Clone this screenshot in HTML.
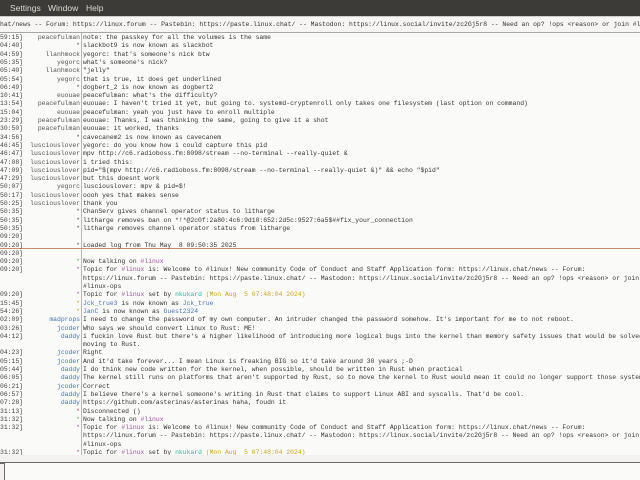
<!DOCTYPE html>
<html><head><meta charset="utf-8"><style>
*{margin:0;padding:0;box-sizing:border-box}
body{width:640px;height:480px;overflow:hidden;background:#f6f5f4;position:relative;font-family:"Liberation Mono",monospace;}
#menu{position:absolute;left:0;top:0;width:640px;height:16px;background:#3c3b37;color:#dfdbd2;font-family:"Liberation Sans",sans-serif;font-size:8.5px;line-height:16px}
#menu span{position:absolute;top:0}
#topic{position:absolute;left:0;top:16px;width:640px;height:17px;background:#f6f5f4;border-top:1px solid #cfcdc9;border-bottom:1px solid #a8a6a2;font-size:6.4px;line-height:15px;color:#333;white-space:pre;overflow:hidden}
#chat{position:absolute;left:0;top:33px;width:640px;height:422px;background:#fafaf9;overflow:hidden}
#sep{position:absolute;left:81px;top:0;width:1px;height:422px;background:#b9b7b3}
.r{position:absolute;left:0;height:8.3px;width:640px;font-size:6.4px;line-height:8.3px;white-space:pre;color:#333}
.t{position:absolute;right:617px;color:#444}
.n{position:absolute;right:560px;color:#555}
.m{position:absolute;left:83px}
.b{color:#4a72b8}.g{color:#6ea33a}.y{color:#c9a41a}.p{color:#a34f9f}.red{color:#d33}.tl{color:#2eb59a}
#mark{position:absolute;left:0;top:214.5px;width:640px;height:1px;background:#c98a6a}
#bot{position:absolute;left:0;top:455px;width:640px;height:25px;background:#f2f1ef}
#line{position:absolute;left:0;top:462px;width:640px;height:2px;background:#6b6966}
#inp{position:absolute;left:4px;top:463px;width:640px;height:17px;background:#fafaf9;border-left:1px solid #6b6966}
</style></head><body>
<div id="menu"><span style="left:-3px">r</span><span style="left:10px">Settings</span><span style="left:48px">Window</span><span style="left:86px">Help</span></div>
<div id="topic">hat/news -- Forum: https://linux.forum -- Pastebin: https://paste.linux.chat/ -- Mastodon: https://linux.social/invite/zc2Gj5r8 -- Need an op? !ops &lt;reason&gt; or join #linux-ops</div>
<div id="chat">
<div id="sep"></div>
<div id="mark"></div>
<div class="r" style="top:1px"><span class="t">[09:59:15]</span><span class="n">peacefulman</span><span class="m">note: the passkey for all the volumes is the same</span></div>
<div class="r" style="top:9.3px"><span class="t">[10:04:40]</span><span class="n">*</span><span class="m">slackbot9 is now known as slackbot</span></div>
<div class="r" style="top:17.6px"><span class="t">[10:04:59]</span><span class="n">llanhmock</span><span class="m">yegorc: that's someone's nick btw</span></div>
<div class="r" style="top:25.9px"><span class="t">[10:05:35]</span><span class="n">yegorc</span><span class="m">what's someone's nick?</span></div>
<div class="r" style="top:34.2px"><span class="t">[10:05:40]</span><span class="n">llanhmock</span><span class="m">"jelly"</span></div>
<div class="r" style="top:42.5px"><span class="t">[10:05:54]</span><span class="n">yegorc</span><span class="m">that is true, it does get underlined</span></div>
<div class="r" style="top:50.8px"><span class="t">[10:06:49]</span><span class="n">*</span><span class="m">dogbert_2 is now known as dogbert2</span></div>
<div class="r" style="top:59.1px"><span class="t">[10:10:41]</span><span class="n">euouae</span><span class="m">peacefulman: what's the difficulty?</span></div>
<div class="r" style="top:67.4px"><span class="t">[10:13:54]</span><span class="n">peacefulman</span><span class="m">euouae: I haven't tried it yet, but going to. systemd-cryptenroll only takes one filesystem (last option on command)</span></div>
<div class="r" style="top:75.7px"><span class="t">[10:15:04]</span><span class="n">euouae</span><span class="m">peacefulman: yeah you just have to enroll multiple</span></div>
<div class="r" style="top:84px"><span class="t">[10:23:29]</span><span class="n">peacefulman</span><span class="m">euouae: Thanks, I was thinking the same, going to give it a shot</span></div>
<div class="r" style="top:92.3px"><span class="t">[10:30:50]</span><span class="n">peacefulman</span><span class="m">euouae: it worked, thanks</span></div>
<div class="r" style="top:100.6px"><span class="t">[10:34:56]</span><span class="n">*</span><span class="m">cavecanem2 is now known as cavecanem</span></div>
<div class="r" style="top:108.9px"><span class="t">[10:46:45]</span><span class="n">lusciouslover</span><span class="m">yegorc: do you know how i could capture this pid</span></div>
<div class="r" style="top:117.2px"><span class="t">[10:46:47]</span><span class="n">lusciouslover</span><span class="m">mpv http://c6.radioboss.fm:8098/stream --no-terminal --really-quiet &amp;</span></div>
<div class="r" style="top:125.5px"><span class="t">[10:47:08]</span><span class="n">lusciouslover</span><span class="m">i tried this:</span></div>
<div class="r" style="top:133.8px"><span class="t">[10:47:09]</span><span class="n">lusciouslover</span><span class="m">pid="$(mpv http://c6.radioboss.fm:8098/stream --no-terminal --really-quiet &amp;)" &amp;&amp; echo "$pid"</span></div>
<div class="r" style="top:142.1px"><span class="t">[10:47:29]</span><span class="n">lusciouslover</span><span class="m">but this doesnt work</span></div>
<div class="r" style="top:150.4px"><span class="t">[10:50:07]</span><span class="n">yegorc</span><span class="m">lusciouslover: mpv &amp; pid=$!</span></div>
<div class="r" style="top:158.7px"><span class="t">[10:50:17]</span><span class="n">lusciouslover</span><span class="m">oooh yes that makes sense</span></div>
<div class="r" style="top:167px"><span class="t">[10:50:25]</span><span class="n">lusciouslover</span><span class="m">thank you</span></div>
<div class="r" style="top:175.3px"><span class="t">[10:50:35]</span><span class="n">*</span><span class="m">ChanServ gives channel operator status to litharge</span></div>
<div class="r" style="top:183.6px"><span class="t">[10:50:35]</span><span class="n">*</span><span class="m">litharge removes ban on *!*@2c0f:2a80:4c6:9d10:652:2d5c:9527:6a5$##fix_your_connection</span></div>
<div class="r" style="top:191.9px"><span class="t">[10:50:35]</span><span class="n">*</span><span class="m">litharge removes channel operator status from litharge</span></div>
<div class="r" style="top:200.2px"><span class="t">[11:09:20]</span></div>
<div class="r" style="top:208.5px"><span class="t">[11:09:20]</span><span class="n">*</span><span class="m">Loaded log from Thu May  8 09:50:35 2025</span></div>
<div class="r" style="top:216.8px"><span class="t">[11:09:20]</span></div>
<div class="r" style="top:225.1px"><span class="t">[11:09:20]</span><span class="n g">*</span><span class="m">Now talking on <span class="p">#linux</span></span></div>
<div class="r" style="top:233.4px"><span class="t">[11:09:20]</span><span class="n p">*</span><span class="m">Topic for <span class="p">#linux</span> is: Welcome to #linux! New community Code of Conduct and Staff Application form: https://linux.chat/news -- Forum:</span></div>
<div class="r" style="top:241.7px"><span class="m">https://linux.forum -- Pastebin: https://paste.linux.chat/ -- Mastodon: https://linux.social/invite/zc2Gj5r8 -- Need an op? !ops &lt;reason&gt; or join</span></div>
<div class="r" style="top:250px"><span class="m">#linux-ops</span></div>
<div class="r" style="top:258.3px"><span class="t">[11:09:20]</span><span class="n p">*</span><span class="m">Topic for <span class="p">#linux</span> set by <span class="tl">nkukard</span> <span class="y">(Mon Aug  5 07:48:04 2024)</span></span></div>
<div class="r" style="top:266.6px"><span class="t">[11:15:45]</span><span class="n y">*</span><span class="m"><span class="b">Jck_true3</span> is now known as <span class="b">Jck_true</span></span></div>
<div class="r" style="top:274.9px"><span class="t">[11:54:26]</span><span class="n y">*</span><span class="m"><span class="b">JanC</span> is now known as <span class="b">Guest2324</span></span></div>
<div class="r" style="top:283.2px"><span class="t">[12:02:09]</span><span class="n b">madprops</span><span class="m">I need to change the password of my own computer. An intruder changed the password somehow. It's important for me to not reboot.</span></div>
<div class="r" style="top:291.5px"><span class="t">[12:03:26]</span><span class="n b">jcoder</span><span class="m">Who says we should convert Linux to Rust: ME!</span></div>
<div class="r" style="top:299.8px"><span class="t">[12:04:12]</span><span class="n b">daddy</span><span class="m">i fuckin love Rust but there's a higher likelihood of introducing more logical bugs into the kernel than memory safety issues that would be solved</span></div>
<div class="r" style="top:308.1px"><span class="m">moving to Rust.</span></div>
<div class="r" style="top:316.4px"><span class="t">[12:04:23]</span><span class="n b">jcoder</span><span class="m">Right</span></div>
<div class="r" style="top:324.7px"><span class="t">[12:05:15]</span><span class="n b">jcoder</span><span class="m">And it'd take forever... I mean Linux is freaking BIG so it'd take around 30 years ;-D</span></div>
<div class="r" style="top:333px"><span class="t">[12:05:44]</span><span class="n b">daddy</span><span class="m">I do think new code written for the kernel, when possible, should be written in Rust when practical</span></div>
<div class="r" style="top:341.3px"><span class="t">[12:06:05]</span><span class="n b">daddy</span><span class="m">The kernel still runs on platforms that aren't supported by Rust, so to move the kernel to Rust would mean it could no longer support those systems</span></div>
<div class="r" style="top:349.6px"><span class="t">[12:06:21]</span><span class="n b">jcoder</span><span class="m">Correct</span></div>
<div class="r" style="top:357.9px"><span class="t">[12:06:57]</span><span class="n b">daddy</span><span class="m">I believe there's a kernel someone's writing in Rust that claims to support Linux ABI and syscalls. That'd be cool.</span></div>
<div class="r" style="top:366.2px"><span class="t">[12:07:28]</span><span class="n b">daddy</span><span class="m">https://github.com/asterinas/asterinas haha, foudn it</span></div>
<div class="r" style="top:374.5px"><span class="t">[12:31:13]</span><span class="n red">*</span><span class="m">Disconnected ()</span></div>
<div class="r" style="top:382.8px"><span class="t">[12:31:32]</span><span class="n g">*</span><span class="m">Now talking on <span class="p">#linux</span></span></div>
<div class="r" style="top:391.1px"><span class="t">[12:31:32]</span><span class="n p">*</span><span class="m">Topic for <span class="p">#linux</span> is: Welcome to #linux! New community Code of Conduct and Staff Application form: https://linux.chat/news -- Forum:</span></div>
<div class="r" style="top:399.4px"><span class="m">https://linux.forum -- Pastebin: https://paste.linux.chat/ -- Mastodon: https://linux.social/invite/zc2Gj5r8 -- Need an op? !ops &lt;reason&gt; or join</span></div>
<div class="r" style="top:407.7px"><span class="m">#linux-ops</span></div>
<div class="r" style="top:416px"><span class="t">[12:31:32]</span><span class="n p">*</span><span class="m">Topic for <span class="p">#linux</span> set by <span class="tl">nkukard</span> <span class="y">(Mon Aug  5 07:48:04 2024)</span></span></div>
</div>
<div id="bot"></div>
<div id="line"></div>
<div id="inp"></div>
</body></html>
